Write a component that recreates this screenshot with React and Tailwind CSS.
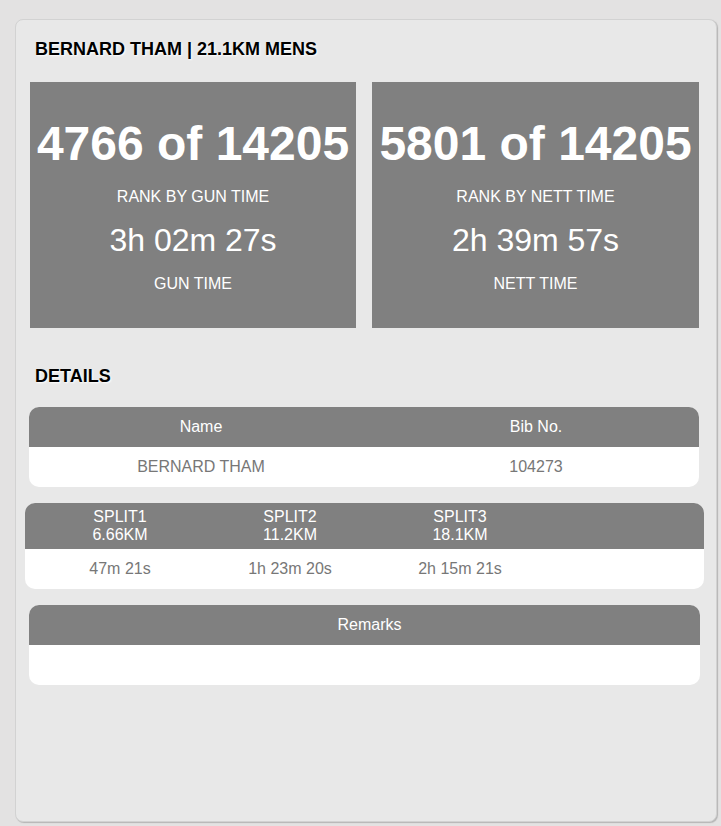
export default function App() {
  const font = { fontFamily: '"Liberation Sans", Arial, sans-serif' };
  return (
    <div className="min-h-[826px] bg-[#e3e2e2] pt-[19px] pl-[15px]" style={font}>
      <div className="w-[702px] h-[803px] bg-[#e8e8e8] rounded-[8px] border border-[#d2d2d2] shadow-[1px_1px_1px_#b5b5b5]">
        {/* Title */}
        <h1 className="pt-[20px] pl-[19px] text-[18px] leading-[18px] font-bold text-black [text-shadow:1px_1px_2px_#ffffff]">
          BERNARD THAM | 21.1KM MENS
        </h1>

        {/* Rank boxes */}
        <div className="mt-[24px] pl-[14px] flex gap-[16px]">
          <RankBox rank="4766 of 14205" rankLabel="RANK BY GUN TIME" time="3h 02m 27s" timeLabel="GUN TIME" w="w-[326px]" />
          <RankBox rank="5801 of 14205" rankLabel="RANK BY NETT TIME" time="2h 39m 57s" timeLabel="NETT TIME" w="w-[327px]" />
        </div>

        {/* Details */}
        <h2 className="mt-[39px] pl-[19px] text-[18px] leading-[18px] font-bold text-black [text-shadow:1px_1px_2px_#ffffff]">
          DETAILS
        </h2>

        <div className="mt-[22px] ml-[13px] w-[670px] rounded-[10px] overflow-hidden bg-white">
          <div className="grid grid-cols-[344px_1fr] h-[40px] items-center bg-[#808080] text-white text-[16px]">
            <div className="text-center">Name</div>
            <div className="text-center">Bib No.</div>
          </div>
          <div className="grid grid-cols-[344px_1fr] h-[40px] items-center text-[#777777] text-[16px]">
            <div className="text-center">BERNARD THAM</div>
            <div className="text-center">104273</div>
          </div>
        </div>

        <div className="mt-[16px] ml-[9px] w-[679px] rounded-[10px] overflow-hidden bg-white">
          <div className="grid grid-cols-[170px_170px_170px] pl-[10px] h-[46px] items-center bg-[#808080] text-white text-[16px] leading-[18px]">
            <div className="text-center">SPLIT1<br />6.66KM</div>
            <div className="text-center">SPLIT2<br />11.2KM</div>
            <div className="text-center">SPLIT3<br />18.1KM</div>
          </div>
          <div className="grid grid-cols-[170px_170px_170px] pl-[10px] h-[40px] items-center text-[#777777] text-[16px]">
            <div className="text-center">47m 21s</div>
            <div className="text-center">1h 23m 20s</div>
            <div className="text-center">2h 15m 21s</div>
          </div>
        </div>

        <div className="mt-[16px] ml-[13px] w-[671px] rounded-[10px] overflow-hidden bg-white">
          <div className="h-[40px] flex items-center justify-center pl-[10px] bg-[#808080] text-white text-[16px]">
            Remarks
          </div>
          <div className="h-[40px]" />
        </div>
      </div>
    </div>
  );
}

function RankBox({ rank, rankLabel, time, timeLabel, w }) {
  return (
    <div className={`${w} h-[246px] bg-[#808080] text-white text-center pt-[38px]`}>
      <div className="text-[48px] leading-[48px] font-bold whitespace-nowrap">{rank}</div>
      <div className="mt-[21px] text-[16px] leading-[16px]">{rankLabel}</div>
      <div className="mt-[19px] text-[32px] leading-[32px]">{time}</div>
      <div className="mt-[20px] text-[16px] leading-[16px]">{timeLabel}</div>
    </div>
  );
}
